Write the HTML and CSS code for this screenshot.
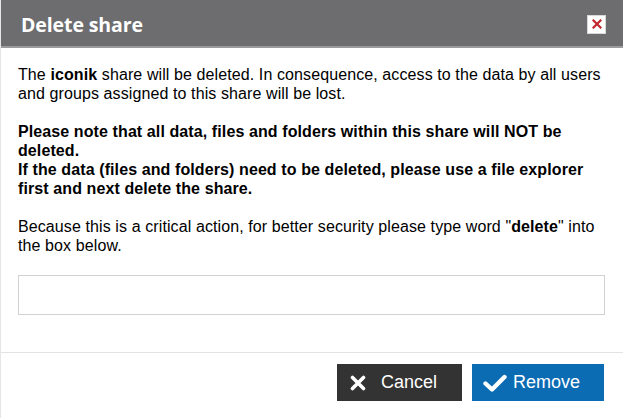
FILE: index.html
```html
<!DOCTYPE html>
<html>
<head>
<meta charset="utf-8">
<link rel="stylesheet" href="styles.css">
</head>
<body>
<div class="dialog">
  <div class="header">
    <h1 class="title">Delete share</h1>
    <button class="close" aria-label="Close">
      <svg width="10" height="10" viewBox="0 0 10 10"><path d="M1.5 1.5 L8.5 8.5 M8.5 1.5 L1.5 8.5" stroke="#c1272d" stroke-width="2.2" stroke-linecap="square"/></svg>
    </button>
  </div>
  <div class="content">
    <p>The <b>iconik</b> share will be deleted. In consequence, access to the data by all users and groups assigned to this share will be lost.</p>
    <p class="strong">Please note that all data, files and folders within this share will NOT be deleted.<br>If the data (files and folders) need to be deleted, please use a file explorer first and next delete the share.</p>
    <p class="last">Because this is a critical action, for better security please type word "<b>delete</b>" into the box below.</p>
    <input class="confirm" type="text">
  </div>
  <div class="footer">
    <button class="btn btn-cancel">
      <svg class="ico ico-x" width="16" height="16" viewBox="0 0 16 16"><path d="M2.5 2.5 L13.5 13.5 M13.5 2.5 L2.5 13.5" stroke="#fff" stroke-width="3.6" stroke-linecap="round"/></svg>
      <span>Cancel</span>
    </button>
    <button class="btn btn-remove">
      <svg class="ico ico-check" width="24" height="18" viewBox="0 0 24 18"><path d="M2.5 9.5 L9 15.5 L21.5 3" stroke="#fff" stroke-width="4.4" stroke-linecap="round" stroke-linejoin="round" fill="none"/></svg>
      <span>Remove</span>
    </button>
  </div>
</div>
</body>
</html>
```

FILE: styles.css
```css
html, body {
  margin: 0;
  padding: 0;
  background: #fff;
}

.dialog {
  width: 623px;
  height: 418px;
  box-sizing: border-box;
  border-left: 1px solid #e6e6e6;
  display: flex;
  flex-direction: column;
  font-family: "Liberation Sans", Arial, sans-serif;
  color: #000;
}

.header {
  box-sizing: border-box;
  height: 48px;
  flex: none;
  background: #6d6d6f;
  border-bottom: 2px solid #9b9b9b;
  display: flex;
  align-items: center;
  justify-content: space-between;
  padding: 3px 17px 0 20px;
}

.title {
  margin: 0;
  font-family: "Open Sans", sans-serif;
  font-size: 19.5px;
  font-weight: 700;
  color: #fff;
  letter-spacing: -0.1px;
}

.close {
  width: 19px;
  height: 19px;
  padding: 0;
  margin-top: -1px;
  border: 1px solid #d8d8d8;
  background: #fff;
  display: flex;
  align-items: center;
  justify-content: center;
}

.content {
  padding: 17px 17px 37px 17px;
}

.content p {
  margin: 0 0 19px 0;
  font-size: 16px;
  line-height: 19px;
  letter-spacing: 0.1px;
}

.content p.strong {
  font-weight: 700;
}

.content p.last {
  margin-bottom: 20px;
}

.confirm {
  display: block;
  width: 587px;
  height: 40px;
  box-sizing: border-box;
  margin: 0;
  border: 1px solid #d2d2d2;
  background: #fff;
  outline: none;
}

.footer {
  border-top: 1px solid #e3e3e3;
  padding: 11px 19px 0 0;
  display: flex;
  justify-content: flex-end;
  gap: 10px;
}

.btn {
  height: 37px;
  border: none;
  margin: 0;
  display: flex;
  align-items: center;
  color: #fff;
  font-family: "Liberation Sans", Arial, sans-serif;
  font-size: 18px;
  cursor: pointer;
}

.btn-cancel {
  width: 125px;
  background: #333333;
  padding: 0 0 0 13px;
}

.btn-cancel .ico {
  margin-right: 15px;
}

.btn-remove {
  width: 132px;
  background: #0b6cb3;
  padding: 0 0 0 11px;
}

.btn-remove .ico {
  margin-right: 6px;
}
```
